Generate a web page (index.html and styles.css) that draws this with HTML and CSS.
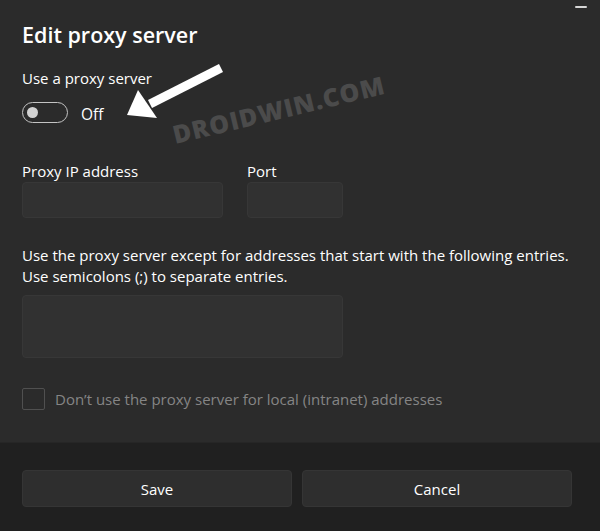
FILE: index.html
```html
<!DOCTYPE html>
<html lang="en">
<head>
<meta charset="utf-8">
<title>Edit proxy server</title>
<link rel="stylesheet" href="styles.css">
</head>
<body>
<div class="window">
  <span class="min-btn" aria-label="Minimize"></span>

  <main class="content">
    <h1 class="title">Edit proxy server</h1>

    <div class="label">Use a proxy server</div>
    <div class="toggle-row">
      <span class="toggle"><span class="knob"></span></span>
      <span class="toggle-text">Off</span>
    </div>

    <div class="address-row">
      <div class="field">
        <div class="label">Proxy IP address</div>
        <div class="input input-ip"></div>
      </div>
      <div class="field">
        <div class="label">Port</div>
        <div class="input input-port"></div>
      </div>
    </div>

    <p class="hint">Use the proxy server except for addresses that start with the following entries.<br>Use semicolons (;) to separate entries.</p>
    <div class="input input-area"></div>

    <div class="check-row">
      <span class="checkbox"></span>
      <span class="check-text">Don’t use the proxy server for local (intranet) addresses</span>
    </div>
  </main>

  <footer class="footer">
    <button class="btn">Save</button>
    <button class="btn">Cancel</button>
  </footer>

  <svg class="arrow" width="600" height="531" viewBox="0 0 600 531" aria-hidden="true">
    <line x1="221" y1="68" x2="150" y2="104" stroke="#ffffff" stroke-width="9"/>
    <polygon points="127,115 138,90 157,118" fill="#ffffff"/>
  </svg>
  <div class="watermark">DROIDWIN.COM</div>
</div>
</body>
</html>
```

FILE: styles.css
```css
* {
  box-sizing: border-box;
}

html, body {
  margin: 0;
  padding: 0;
}

body {
  width: 600px;
  height: 531px;
  overflow: hidden;
  background: #2b2b2b;
  color: #ffffff;
  font-family: "Open Sans", "Noto Sans", sans-serif;
  font-size: 15px;
}

.window {
  position: relative;
  display: flex;
  flex-direction: column;
  height: 531px;
}

/* partially visible caption button */
.min-btn {
  position: absolute;
  top: 6px;
  left: 575px;
  width: 12px;
  height: 2px;
  background: #d6d6d6;
  border-radius: 1px;
}

.content {
  flex: 1;
  padding: 21px 22px 0;
}

.title {
  margin: 0;
  font-size: 21.5px;
  line-height: 28px;
  font-weight: 600;
}

.label {
  line-height: 20px;
}

.content > .label {
  margin-top: 19px;
}

.toggle-row {
  display: flex;
  align-items: center;
  gap: 13px;
  margin-top: 14px;
  height: 21px;
}

.toggle {
  display: flex;
  align-items: center;
  width: 46px;
  height: 21px;
  border: 1px solid #c4c4c4;
  border-radius: 11px;
  padding-left: 4px;
}

.knob {
  width: 11px;
  height: 11px;
  border-radius: 50%;
  background: #d2d2d2;
}

.toggle-text {
  font-size: 15.5px;
  line-height: 20px;
  padding-top: 2px;
}

.address-row {
  display: flex;
  gap: 24px;
  margin-top: 38px;
}

.field .input {
  margin-top: 1px;
}

.input {
  background: #313131;
  border: 1px solid #373737;
  border-radius: 4px;
}

.input-ip {
  width: 201px;
  height: 36px;
}

.input-port {
  width: 96px;
  height: 36px;
}

.hint {
  margin: 27px 0 0;
  line-height: 21px;
}

.input-area {
  margin-top: 8px;
  width: 321px;
  height: 63px;
}

.check-row {
  display: flex;
  align-items: center;
  gap: 10px;
  margin-top: 30px;
}

.checkbox {
  width: 23px;
  height: 22px;
  border: 1px solid #505050;
  border-radius: 2px;
}

.check-text {
  color: #858585;
  line-height: 20px;
}

.footer {
  height: 89px;
  background: #202020;
  border-top: 1px solid #262626;
  display: grid;
  grid-template-columns: 1fr 1fr;
  gap: 10px;
  padding: 27px 28px 24px 22px;
}

.btn {
  height: 37px;
  background: #2e2e2e;
  border: 1px solid #353535;
  border-radius: 4px;
  color: #ffffff;
  font-family: inherit;
  font-size: 15px;
}

/* annotation overlay drawn on top of the dialog */
.arrow {
  position: absolute;
  left: 0;
  top: 0;
  pointer-events: none;
}

.watermark {
  position: absolute;
  left: 176px;
  top: 122px;
  transform-origin: 0 100%;
  transform: rotate(-13.5deg);
  font-family: "Open Sans", sans-serif;
  font-weight: 800;
  font-size: 25px;
  line-height: 25px;
  letter-spacing: 1px;
  color: #4b4b4b;
  pointer-events: none;
}
```
